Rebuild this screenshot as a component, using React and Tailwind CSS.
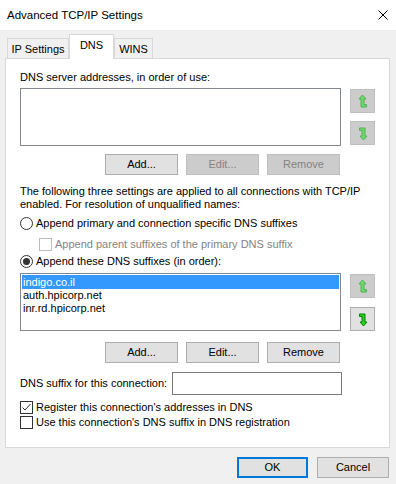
import React from 'react';

const ArrowIcon = ({ down, enabled }) => {
    const fill = enabled ? '#1fd31f' : '#6fd86f';
    const stroke = enabled ? '#0a7d0a' : '#52b152';
    return (
        <svg width="10" height="15" viewBox="-1 -1 10 15" style={down ? { transform: 'rotate(180deg)' } : undefined}>
            <polygon
                points="3.5,0 7,4 5,4 5,9.5 7.5,9.5 7.5,12 2,12 2,4 0,4"
                fill={fill}
                stroke={stroke}
                strokeWidth="1"
                strokeLinejoin="miter"
            />
        </svg>
    );
};

const MoveButton = ({ down, enabled }) => (
    <div
        className={`w-[25px] h-[24px] flex items-center justify-center border ${enabled ? 'bg-[#e1e1e1] border-[#adadad]' : 'bg-[#cccccc] border-[#bfbfbf]'}`}
    >
        <ArrowIcon down={down} enabled={enabled} />
    </div>
);

const Btn = ({ children, disabled, primary, className = '' }) => (
    <div
        className={`h-[21px] flex items-center justify-center ${primary ? 'border-2 border-[#0078d7] bg-[#e1e1e1]' : disabled ? 'border border-[#bfbfbf] bg-[#cccccc] text-[#838383]' : 'border border-[#adadad] bg-[#e1e1e1]'} ${className}`}
    >
        {children}
    </div>
);

const Radio = ({ checked }) => (
    <div className="w-[13px] h-[13px] rounded-full border border-[#333333] bg-white flex items-center justify-center shrink-0">
        {checked && <div className="w-[7px] h-[7px] rounded-full bg-[#333333]" />}
    </div>
);

const Check = ({ checked, disabled }) => (
    <div className={`w-[13px] h-[13px] border bg-white flex items-center justify-center shrink-0 ${disabled ? 'border-[#bcbcbc]' : 'border-[#333333]'}`}>
        {checked && (
            <svg width="11" height="11" viewBox="0 0 11 11">
                <polyline points="1.5,5.5 4,8 9.5,2" fill="none" stroke="#333333" strokeWidth="1" />
            </svg>
        )}
    </div>
);

const ListBox = ({ items = [] }) => (
    <div className="w-[321px] h-[58px] border border-[#828790] bg-white p-px">
        {items.map((item, i) => (
            <div
                key={item}
                className={`pl-[1px] ${i === 0 ? 'bg-[#3399ff] text-white h-[14px] leading-[14px]' : 'h-[13px] leading-[13px]'}`}
            >
                {item}
            </div>
        ))}
    </div>
);

export default function App() {
    return (
        <div className="w-[396px] h-[484px] flex flex-col bg-[#f0f0f0] text-black text-[11px] leading-[15px] font-['Liberation_Sans',sans-serif] overflow-hidden whitespace-nowrap">
            {/* Title bar */}
            <div className="h-[30px] bg-white flex items-center justify-between pl-[7px] pr-[8px] shrink-0">
                <span className="text-[11.5px]">Advanced TCP/IP Settings</span>
                <svg width="10" height="10" viewBox="0 0 10 10">
                    <path d="M0.5 0.5 L9.5 9.5 M9.5 0.5 L0.5 9.5" stroke="#000" strokeWidth="1" />
                </svg>
            </div>

            {/* Tabs */}
            <div className="flex items-end pl-[7px] pt-[3px] h-[28px] shrink-0 relative z-10">
                <div className="w-[62px] h-[20px] border border-b-0 border-[#d9d9d9] bg-[#f0f0f0] flex items-center justify-center pt-px">
                    IP Settings
                </div>
                <div className="w-[45px] h-[25px] border border-b-0 border-[#d9d9d9] bg-white flex items-start justify-center pt-[3px] -mb-px">
                    DNS
                </div>
                <div className="w-[39px] h-[20px] border border-b-0 border-[#d9d9d9] bg-[#f0f0f0] flex items-center justify-center pt-px">
                    WINS
                </div>
            </div>

            {/* Panel */}
            <div className="ml-[5px] w-[385px] h-[390px] border border-[#d9d9d9] bg-white pl-[14px] pt-[11px] shrink-0">
                <div>DNS server addresses, in order of use:</div>
                <div className="flex mt-[3px] gap-[9px]">
                    <ListBox />
                    <div className="flex flex-col gap-[8px] pt-px">
                        <MoveButton />
                        <MoveButton down />
                    </div>
                </div>
                <div className="flex gap-[8px] mt-[8px] pl-[85px]">
                    <Btn className="w-[73px]">Add...</Btn>
                    <Btn className="w-[73px]" disabled>Edit...</Btn>
                    <Btn className="w-[73px]" disabled>Remove</Btn>
                </div>

                <div className="mt-[10px] leading-[13px]">
                    The following three settings are applied to all connections with TCP/IP
                    <br />
                    enabled. For resolution of unqualified names:
                </div>

                <div className="flex items-center gap-[3px] mt-[5px] h-[15px]">
                    <Radio />
                    <span>Append primary and connection specific DNS suffixes</span>
                </div>
                <div className="flex items-center gap-[3px] mt-[6px] pl-[19px] h-[15px] text-[#838383]">
                    <Check disabled />
                    <span>Append parent suffixes of the primary DNS suffix</span>
                </div>
                <div className="flex items-center gap-[3px] mt-[2px] h-[15px]">
                    <Radio checked />
                    <span>Append these DNS suffixes (in order):</span>
                </div>

                <div className="flex mt-[4px] gap-[9px]">
                    <ListBox items={['indigo.co.il', 'auth.hpicorp.net', 'inr.rd.hpicorp.net']} />
                    <div className="flex flex-col gap-[9px] pt-px">
                        <MoveButton />
                        <MoveButton down enabled />
                    </div>
                </div>
                <div className="flex gap-[8px] mt-[11px] pl-[85px]">
                    <Btn className="w-[73px]">Add...</Btn>
                    <Btn className="w-[73px]">Edit...</Btn>
                    <Btn className="w-[73px]">Remove</Btn>
                </div>

                <div className="flex items-center mt-[9px] gap-[4px]">
                    <span className="w-[148px]">DNS suffix for this connection:</span>
                    <div className="w-[170px] h-[23px] border border-[#7a7a7a] bg-white" />
                </div>

                <div className="flex items-center gap-[3px] mt-[5px] h-[15px]">
                    <Check checked />
                    <span>Register this connection's addresses in DNS</span>
                </div>
                <div className="flex items-center gap-[3px] mt-0 h-[15px]">
                    <Check />
                    <span>Use this connection's DNS suffix in DNS registration</span>
                </div>
            </div>

            {/* Footer */}
            <div className="flex justify-end gap-[9px] pr-[7px] pt-[9px]">
                <Btn primary className="w-[71px] h-[21px]">OK</Btn>
                <Btn className="w-[72px] h-[21px]">Cancel</Btn>
            </div>
        </div>
    );
}
